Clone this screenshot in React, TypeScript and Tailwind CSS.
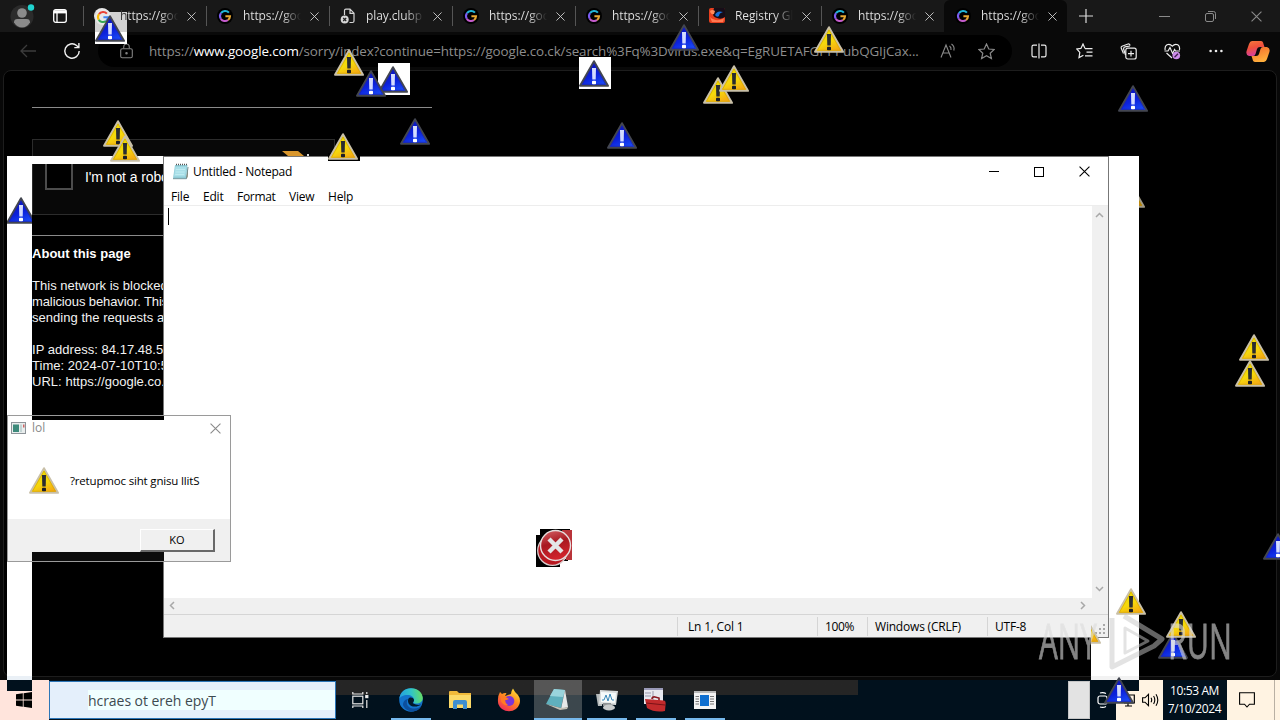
import React from 'react';
import clsx from 'clsx';

interface TabInfo {
  title: string;
  icon: 'google' | 'googleLight' | 'file' | 'registry';
  active?: boolean;
}

interface Stamp {
  kind: 'warn' | 'info';
  x: number;
  y: number;
  back?: 'white' | 'black';
}

const tabs: TabInfo[] = [
  { title: 'https://goo', icon: 'googleLight' },
  { title: 'https://goo', icon: 'google' },
  { title: 'play.clubp', icon: 'file' },
  { title: 'https://goo', icon: 'google' },
  { title: 'https://goo', icon: 'google' },
  { title: 'Registry Gl', icon: 'registry' },
  { title: 'https://goo', icon: 'google' },
  { title: 'https://goo', icon: 'google', active: true },
];

// x, y is the top left corner of the 30x27 triangle
const stamps: Stamp[] = [
  { kind: 'info', x: 95, y: 15 },
  { kind: 'warn', x: 334, y: 49 },
  { kind: 'info', x: 378, y: 66, back: 'white' },
  { kind: 'info', x: 356, y: 70 },
  { kind: 'info', x: 579, y: 60, back: 'white' },
  { kind: 'info', x: 669, y: 24 },
  { kind: 'warn', x: 814, y: 26 },
  { kind: 'warn', x: 703, y: 77 },
  { kind: 'warn', x: 719, y: 65 },
  { kind: 'info', x: 400, y: 118 },
  { kind: 'info', x: 607, y: 122 },
  { kind: 'info', x: 1118, y: 85 },
  { kind: 'warn', x: 103, y: 120 },
  { kind: 'warn', x: 110, y: 135 },
  { kind: 'warn', x: 328, y: 133, back: 'black' },
  { kind: 'warn', x: 1239, y: 334 },
  { kind: 'warn', x: 1235, y: 360 },
  { kind: 'info', x: 1263, y: 533 },
  { kind: 'warn', x: 1116, y: 588 },
  { kind: 'info', x: 1158, y: 632 },
  { kind: 'warn', x: 1166, y: 611 },
  { kind: 'info', x: 1104, y: 677 },
];

const ui = "font-['Open_Sans','Noto_Sans',sans-serif]";

function Triangle({ kind }: { kind: 'warn' | 'info' }) {
  const info = kind === 'info';
  return (
    <svg width="30" height="27" viewBox="0 0 30 27" className="block shrink-0">
      <defs>
        <linearGradient id={'fill-' + kind} x1="0.3" y1="0" x2="0.8" y2="1">
          <stop offset="0" stopColor={info ? '#0810b8' : '#e6e000'} />
          <stop offset="0.55" stopColor={info ? '#0c22dc' : '#f6d80c'} />
          <stop offset="1" stopColor={info ? '#1c50fa' : '#f4a014'} />
        </linearGradient>
      </defs>
      <path
        d="M15 1.2 L29 25.8 H1 Z"
        fill={`url(#fill-${kind})`}
        stroke={info ? '#434650' : '#c9c0a8'}
        strokeWidth="1.9"
        strokeLinejoin="round"
      />
      <path d="M15 4 L26.5 24.3 H3.5 Z" fill="none" stroke={info ? '#1a22b0' : '#d9a800'} strokeWidth="0.7" />
      <path d="M13 8 h4 l-0.3 11.5 h-3.4 Z" fill={info ? '#d4dcff' : '#2a2c30'} />
      <rect x="13" y="20.8" width="4" height="3.4" rx="0.8" fill={info ? '#ffffff' : '#1c1d26'} />
    </svg>
  );
}

function GoogleIcon({ light }: { light?: boolean }) {
  const c = light ? ['#ea4335', '#fbbc05', '#34a853', '#4285f4'] : ['#22b6d8', '#7c5cf0', '#c45ccc', '#e8a832'];
  return (
    <svg width="16" height="16" viewBox="0 0 16 16" className="shrink-0">
      <circle cx="8" cy="8" r="8" fill={light ? '#e8e8e8' : '#000'} />
      <g fill="none" strokeWidth="2.1">
        <path d="M11.9 4.6 A5 5 0 0 0 4 5.2" stroke={c[0]} />
        <path d="M4 5.2 A5 5 0 0 0 3.8 10.8" stroke={c[1]} />
        <path d="M3.8 10.8 A5 5 0 0 0 11 12" stroke={c[2]} />
        <path d="M11 12 A5 5 0 0 0 13 8.2 H8.4" stroke={c[3]} />
      </g>
    </svg>
  );
}

function TabIcon({ icon }: { icon: TabInfo['icon'] }) {
  if (icon === 'file') {
    return (
      <svg width="16" height="16" viewBox="0 0 16 16" className="shrink-0" fill="none">
        <path d="M4.5 7 V2.6 q0-1.4 1.4-1.4 H10 l4 4 V13 q0 1.5-1.5 1.5 H9.5 M10 1.4 V5.3 H14" stroke="#d5d5d5" strokeWidth="1.2" />
        <circle cx="4.7" cy="11.5" r="4" fill="#d5d5d5" />
        <path d="M3.2 10 l3 3 M6.2 10 l-3 3" stroke="#222" strokeWidth="1.2" />
      </svg>
    );
  }
  if (icon === 'registry') {
    return (
      <svg width="16" height="16" viewBox="0 0 16 16" className="shrink-0">
        <rect width="16" height="15" rx="2" fill="#e8401f" />
        <path d="M5 0 H15 Q16 0 16 2 V9 Q12 12 8 10 Q3 9 4 4 Z" fill="#160d18" />
        <path d="M6 7 Q8 2 14 4 Q10 5 10 8 Q8 10 6 7" fill="#1670d8" />
        <path d="M1 3 Q3 1 6 3 L5 6 Q2 7 1 3" fill="#ff8a5a" />
        <path d="M1 9 C5 13 11 13 15 10 L14 14 H3 Z" fill="#ff7a52" />
      </svg>
    );
  }
  return <GoogleIcon light={icon === 'googleLight'} />;
}

function Cross({ size, color }: { size: number; color: string }) {
  return (
    <svg width={size} height={size} viewBox="0 0 10 10" className="shrink-0" fill="none">
      <path d="M0.5 0.5 L9.5 9.5 M9.5 0.5 L0.5 9.5" stroke={color} strokeWidth="1" />
    </svg>
  );
}

function TabBar() {
  return (
    <div className="flex h-8 w-full shrink-0 bg-[#181818]">
      <div className="flex w-[83px] shrink-0 items-center">
        <svg width="26" height="26" viewBox="0 0 26 26" className="ml-[10px]">
          <circle cx="12" cy="13.5" r="11.5" fill="#2b2b2b" />
          <circle cx="12" cy="10" r="4.8" fill="#8b8b8b" />
          <path d="M4 19.5 q0-3.4 3.4-3.4 h9.2 q3.4 0 3.4 3.4 q-3 5-8 5 t-8-5" fill="#8b8b8b" />
          <circle cx="21" cy="4.5" r="3.2" fill="#20d3cf" />
        </svg>
        <svg width="14" height="14" viewBox="0 0 14 14" className="ml-[17px]" fill="none" stroke="#fff" strokeWidth="1.3">
          <rect x="0.7" y="0.7" width="12.6" height="12.6" rx="2" />
          <path d="M1 2.8 H13" strokeWidth="3.2" />
          <path d="M4 4 V13" />
        </svg>
      </div>
      {tabs.map((tab, i) => (
        <div
          key={i}
          className={clsx(
            'flex h-8 w-[123px] shrink-0 items-center',
            tab.active && 'rounded-t-md bg-[#090909]'
          )}
        >
          <div className={clsx('mr-[10px] h-5 w-px', !tab.active && 'bg-[#555]')} />
          <TabIcon icon={tab.icon} />
          <div
            className={clsx(
              ui,
              'ml-[10px] w-[66px] whitespace-nowrap bg-clip-text text-[12px] tracking-[-0.1px] text-transparent',
              tab.icon === 'googleLight'
                ? 'relative z-10 bg-[linear-gradient(90deg,#333_7px,#e6e6e6_7px,#e6e6e6_60%,transparent_88%)]'
                : 'bg-gradient-to-r from-[#e6e6e6] from-60% to-transparent to-88%'
            )}
          >
            {tab.title}
          </div>
          <div className="ml-px flex">
            <Cross size={9} color="#cfcfcf" />
          </div>
        </div>
      ))}
      <svg width="14" height="14" viewBox="0 0 14 14" className="ml-[12px] mt-[9px]" stroke="#dcdcdc" strokeWidth="1.2">
        <path d="M7 0 V14 M0 7 H14" />
      </svg>
      <div className="ml-auto flex items-center gap-[35px] pr-[18px] text-[#8a8a8a]">
        <div className="h-px w-[11px] bg-[#8a8a8a]" />
        <svg width="11" height="11" viewBox="0 0 11 11" fill="none" stroke="currentColor">
          <rect x="0.5" y="2.5" width="8" height="8" rx="1.5" />
          <path d="M3 0.5 H8.5 Q10.5 0.5 10.5 2.5 V8" />
        </svg>
        <Cross size={11} color="#8a8a8a" />
      </div>
    </div>
  );
}

function Toolbar() {
  return (
    <div className="flex h-[38px] w-full shrink-0 items-center bg-[#090909]">
      <svg width="16" height="14" viewBox="0 0 16 14" className="ml-[20px]" fill="none" stroke="#3c3c3c" strokeWidth="1.3">
        <path d="M16 7 H1 M7 1 L1 7 L7 13" />
      </svg>
      <svg width="18" height="18" viewBox="0 0 18 18" className="ml-[27px]" fill="none" stroke="#f0f0f0" strokeWidth="1.4">
        <path d="M16.2 9 A7.2 7.2 0 1 1 13.6 3.5 L15.6 5.4 M15.9 1 V5.6 H11.3" />
      </svg>
      <div className="ml-[17px] flex h-8 w-[914px] items-center rounded-full bg-black">
        <svg width="13" height="16" viewBox="0 0 13 16" className="ml-[22px] shrink-0" fill="none" stroke="#828282" strokeWidth="1.1">
          <rect x="0.7" y="5.7" width="11.6" height="9" rx="1.5" />
          <path d="M3.7 5.5 V4 Q3.7 1 6.5 1 T9.3 4 V5.5" />
          <circle cx="6.5" cy="10.2" r="0.7" fill="#828282" />
        </svg>
        <div className={clsx(ui, 'ml-[16px] w-[774px] whitespace-nowrap text-[13.4px] tracking-[-0.114px] text-[#8d8d8d]')}>
          https://<span className="text-white">www.google.com</span>
          /sorry/index?continue=https://google.co.ck/search%3Fq%3Dvirus.exe&amp;q=EgRUETAFGPPPubQGIjCax...
        </div>
        <svg width="17" height="16" viewBox="0 0 17 16" className="ml-[17px] shrink-0" fill="none" stroke="#8a8a8a" strokeWidth="1.1">
          <path d="M1 14.5 L6 2 L11 14.5 M2.8 10 H9.2" />
          <path d="M9.5 3 Q11.5 4.5 11 7 M11.5 1 Q15 3.5 13.8 7.5" />
        </svg>
        <svg width="17" height="17" viewBox="0 0 17 17" className="ml-[21px] shrink-0" fill="none" stroke="#8a8a8a" strokeWidth="1.2">
          <path d="M8.5 1 L10.8 6 L16.2 6.5 L12.2 10.2 L13.4 15.6 L8.5 12.8 L3.6 15.6 L4.8 10.2 L0.8 6.5 L6.2 6 Z" />
        </svg>
      </div>
      <div className="ml-[19px] flex items-center text-[#ededed]">
        <svg width="16" height="16" viewBox="0 0 16 16" fill="none" stroke="currentColor" strokeWidth="1.2">
          <path d="M6 2.2 H2.6 Q1 2.2 1 3.8 V12.2 Q1 13.8 2.6 13.8 H6 M10 2.2 H13.4 Q15 2.2 15 3.8 V12.2 Q15 13.8 13.4 13.8 H10 M8 0.5 V15.5" />
        </svg>
        <svg width="17" height="16" viewBox="0 0 17 16" className="ml-[29px]" fill="none" stroke="currentColor" strokeWidth="1.2">
          <path d="M9 5.4 L7 1 L4.9 5.4 L0.8 6 L3.8 9.4 L3 14.6 L7.4 12.2" />
          <path d="M9 5.6 H16.5 M10.5 9.2 H16.5 M9 12.8 H16.5" />
        </svg>
        <svg width="17" height="17" viewBox="0 0 17 17" className="ml-[27px]" fill="none" stroke="currentColor" strokeWidth="1.2">
          <path d="M3.5 10.5 L1.2 5 Q0.8 3.8 2 3.2 L8 1 Q9.5 0.7 10.2 2.5 M5.5 12 L3.6 6 Q3.4 4.5 5 3.8 L10 3" />
          <rect x="5.8" y="5.2" width="10.4" height="10.8" rx="2" />
          <path d="M11 7.7 V13.5 M8 10.6 H14" />
        </svg>
        <svg width="17" height="17" viewBox="0 0 17 17" className="ml-[27px]" fill="none" stroke="currentColor" strokeWidth="1.2">
          <path d="M1.2 7 Q0.4 3.5 3 1.8 Q6 0.4 8.3 3.2 Q10.8 0.4 13.8 1.8 Q16.2 3.5 15.4 7 M2.5 10 L8 15" />
          <path d="M0.5 8 H4 L6 4.6 L8.6 10.4 L10.6 6.5 L11.5 8 H16" />
          <circle cx="12.3" cy="12.5" r="3.8" fill="#cc8be8" stroke="none" />
          <path d="M10.5 14.2 L14 10.8" stroke="#3b1d4a" />
        </svg>
        <svg width="14" height="4" viewBox="0 0 14 4" className="ml-[28px]" fill="currentColor">
          <circle cx="1.6" cy="2" r="1.3" />
          <circle cx="7" cy="2" r="1.3" />
          <circle cx="12.4" cy="2" r="1.3" />
        </svg>
        <svg width="24" height="23" viewBox="0 0 24 23" className="ml-[23px]">
          <defs>
            <linearGradient id="cop-a" x1="0" y1="0" x2="0.3" y2="1">
              <stop offset="0" stopColor="#f57a3c" />
              <stop offset="0.5" stopColor="#f0503c" />
              <stop offset="1" stopColor="#d6409f" />
            </linearGradient>
            <linearGradient id="cop-b" x1="0" y1="0" x2="0.4" y2="1">
              <stop offset="0" stopColor="#f0682c" />
              <stop offset="1" stopColor="#ffae3c" />
            </linearGradient>
          </defs>
          <path d="M6 1 H15 Q17 1 17.5 4 L18.5 7 H14 Q11.5 7 11 9 L9.5 14 Q9 16 7 16 H3 Q-0.5 15 0.6 11 L3 4 Q4 1 6 1" fill="url(#cop-a)" />
          <path d="M18 22 H9 Q7 22 6.5 19 L5.5 16 H10 Q12.5 16 13 14 L14.5 9 Q15 7 17 7 H21 Q24.5 8 23.4 12 L21 19 Q20 22 18 22" fill="url(#cop-b)" />
        </svg>
      </div>
    </div>
  );
}

function CaptchaPage() {
  return (
    <div className="h-[610px] w-full bg-[#080808]">
      <div className="ml-[3px] h-[607px] w-[1274px] rounded-lg border border-[#1d1d1d] bg-black pl-7 font-['Liberation_Sans',Arial,sans-serif] text-[13px] leading-4 tracking-[0.03px] text-[#f2f2f2]">
        <div className="mt-[36px] h-px w-[400px] bg-[#8a8a8a]" />
        <div className="mt-[31px] flex h-[76px] w-[303px] items-start border border-[#2c2c2c] bg-[#080808] pl-3 pt-[22px]">
          <div className="h-7 w-7 border-2 border-[#4c4c4c] bg-black" />
          <span className="ml-3 mt-[7px] text-[14px] tracking-[-0.1px] text-white">I'm not a robot</span>
        </div>
        <div className="mt-[20px] h-px w-[400px] bg-[#8a8a8a]" />
        <div className="mt-[10px] font-bold tracking-[0.03px] text-white">About this page</div>
        <p className="mt-4 whitespace-nowrap">
          This network is blocked due to unaddressed abuse complaints about
          <br />
          <span className="tracking-[-0.1px]">malicious behavior. This page checks to see if it's really a human</span>
          <br />
          sending the requests and not a robot coming from this network.
        </p>
        <p className="mt-4">
          IP address: 84.17.48.53
          <br />
          Time: 2024-07-10T10:53:04Z
          <br />
          URL: https://google.co.ck/search
        </p>
      </div>
    </div>
  );
}

function Chevron({ d }: { d: string }) {
  return (
    <svg width="9" height="9" viewBox="0 0 9 9" fill="none" stroke="#a8a8a8" strokeWidth="1.5">
      <path d={d} />
    </svg>
  );
}

function NotepadWindow() {
  return (
    <div
      className={clsx(
        ui,
        'absolute left-[163px] top-[156px] flex h-[482px] w-[946px] flex-col border border-[#777] bg-white text-[12px] text-black'
      )}
    >
      <div className="flex h-[29px] items-center">
        <svg width="17" height="17" viewBox="0 0 17 17" className="ml-[8px]">
          <path d="M3 2 H15.5 L14 15.5 H1 Z" fill="#8fcbd6" />
          <path d="M3.4 3.5 H14.6 L13.2 13.5 H2 Z" fill="#a9dfe8" />
          <path d="M14.2 15.8 L16.2 3 L15.6 14 Z" fill="#8a7750" />
          <path d="M1 15.7 H14.5 L16 4" fill="none" stroke="#5b7f88" strokeWidth="0.8" />
          <path d="M4 1.5 H15" stroke="#555" strokeWidth="1.6" strokeDasharray="1 1" />
          <path d="M4 6.5 H13 M3.6 9 H12.6 M3.2 11.5 H12.2" stroke="#c9f0f5" strokeWidth="0.7" />
        </svg>
        <span className="ml-[4px] pt-px tracking-[-0.25px]">Untitled - Notepad</span>
        <div className="ml-auto flex items-center gap-[35px] pr-[18px]">
          <div className="h-px w-[10px] bg-black" />
          <div className="h-[10px] w-[10px] border border-black" />
          <Cross size={11} color="#000" />
        </div>
      </div>
      <div className="flex h-[20px] items-center border-b border-[#ededed] pl-[7px] pt-[2px] tracking-[-0.2px]">
        <span className="w-8">File</span>
        <span className="w-[34px]">Edit</span>
        <span className="w-[52px] tracking-[-0.3px]">Format</span>
        <span className="w-[39px]">View</span>
        <span>Help</span>
      </div>
      <div className="flex flex-1">
        <div className="flex-1 pl-[4px] pt-[2px]">
          <div className="h-[17px] w-px bg-black" />
        </div>
        <div className="flex w-[16px] flex-col items-center justify-between bg-[#f0f0f0] pb-[5px] pr-px pt-[5px]">
          <Chevron d="M1 6 L4.5 2.5 L8 6" />
          <Chevron d="M1 3 L4.5 6.5 L8 3" />
        </div>
      </div>
      <div className="flex h-[16px] items-center justify-between bg-[#f0f0f0] pb-px pl-[4px] pr-[21px]">
        <Chevron d="M6 1 L2.5 4.5 L6 8" />
        <Chevron d="M3 1 L6.5 4.5 L3 8" />
      </div>
      <div className="flex h-[23px] items-center border-t border-[#d5d5d5] bg-[#f0f0f0] pl-[513px] tracking-[-0.2px]">
        <div className="flex h-[19px] w-[140px] items-center border-l border-[#d5d5d5] pl-[10px] pt-[2px]">Ln 1, Col 1</div>
        <div className="flex h-[19px] w-[50px] items-center border-l border-[#d5d5d5] pl-[7px] pt-[2px] tracking-[-0.4px]">100%</div>
        <div className="flex h-[19px] w-[120px] items-center border-l border-[#d5d5d5] pl-[7px] pt-[2px]">Windows (CRLF)</div>
        <div className="flex h-[19px] flex-1 items-center border-l border-[#d5d5d5] pl-[7px] pt-[2px]">UTF-8</div>
        <svg width="12" height="12" viewBox="0 0 12 12" fill="#a8a8a8" className="mr-px mt-[8px]">
          <path d="M8 0h2v2h-2z M4 4h2v2h-2z M8 4h2v2h-2z M0 8h2v2h-2z M4 8h2v2h-2z M8 8h2v2h-2z" />
        </svg>
      </div>
    </div>
  );
}

function LolDialog() {
  return (
    <div className={clsx(ui, 'absolute left-[7px] top-[415px] flex h-[147px] w-[224px] flex-col bg-white text-[12px]')}>
      <div className="flex h-[26px] items-center pl-[4px] pr-[10px]">
        <svg width="15" height="12" viewBox="0 0 15 12">
          <rect x="0.5" y="0.5" width="14" height="11" fill="#e9eded" stroke="#8d9499" />
          <rect x="2" y="2.5" width="6" height="7.5" fill="#3d8a7b" />
          <rect x="9" y="2.5" width="2" height="7.5" fill="#c3d4d4" />
          <rect x="12" y="2.5" width="1.5" height="3" fill="#c66" />
        </svg>
        <span className="ml-[6px] text-[#8a8a8a]">lol</span>
        <div className="ml-auto">
          <Cross size={11} color="#8a8a8a" />
        </div>
      </div>
      <div className="flex h-[78px] items-center pl-[22px]">
        <Triangle kind="warn" />
        <span className="ml-[11px] mt-[2px] text-[11.5px] tracking-[-0.17px]">?retupmoc siht gnisu llitS</span>
      </div>
      <div className="flex flex-1 bg-[#f0f0f0] pl-[133px] pt-[10px]">
        <div className="flex h-[23px] w-[75px] items-center justify-center border border-b-2 border-r-2 border-b-[#696969] border-r-[#696969] border-l-white border-t-white text-[11px]">
          KO
        </div>
      </div>
      {/* slices of the old desktop bleeding through */}
      <div className="absolute left-[25px] top-0 h-[5px] w-[132px] bg-black" />
      <div className="absolute bottom-0 left-[25px] h-[10px] w-[132px] bg-[#0c0c0c]" />
      <div className="absolute inset-0 border border-[#9a9a9a]" />
    </div>
  );
}

function ErrorIcon() {
  return (
    <svg width="36" height="38" viewBox="0 0 36 38" className="absolute left-[536px] top-[529px]">
      <defs>
        <linearGradient id="err" x1="0" y1="0" x2="0.3" y2="1">
          <stop offset="0" stopColor="#d8686c" />
          <stop offset="0.5" stopColor="#a81820" />
          <stop offset="1" stopColor="#d0242c" />
        </linearGradient>
      </defs>
      <path d="M4 0 H34 V6 H8 V38 H0 V6 H4 Z" fill="#000" />
      <path d="M0 30 H32 V38 H0 Z" fill="#000" />
      <path d="M24 32 H36 V38 H24 Z" fill="#fff" />
      <path d="M26 1 H36 V31 H30 Z" fill="#b9343a" />
      <circle cx="16.5" cy="21.5" r="14.8" fill="#b81820" stroke="#d8cfcf" strokeWidth="1.3" />
      <circle cx="19.5" cy="16.5" r="15" fill="url(#err)" stroke="#e6dcdc" strokeWidth="1.4" />
      <path d="M13 10 L26 23 M26 10 L13 23" stroke="#e4e6e6" strokeWidth="4.4" />
    </svg>
  );
}

function Watermark() {
  return (
    <svg width="200" height="64" viewBox="0 0 200 64" className="absolute left-[1036px] top-[610px] overflow-visible">
      <g
        fill="#dcdcdc"
        stroke="#dcdcdc"
        strokeWidth="0.8"
        opacity="0.6"
        fontFamily="'Open Sans', sans-serif"
        fontSize="50"
      >
        <text x="3" y="49" textLength="58" lengthAdjust="spacingAndGlyphs">ANY</text>
        <text x="132" y="49" textLength="64" lengthAdjust="spacingAndGlyphs">RUN</text>
      </g>
      <g fill="none" stroke="#c8c8c8" opacity="0.5" strokeWidth="5" strokeLinejoin="round">
        <path d="M88 6 L126 29 L118 36 L76 57 V8" />
        <path d="M89 18 L112 31 L89 43 Z" strokeWidth="3" />
      </g>
    </svg>
  );
}

function Underlined({ children, className }: { children: React.ReactNode; className: string }) {
  return (
    <div className={clsx('flex h-10 w-10 items-center justify-center border-b-2 border-[#76b9ed]', className)}>
      {children}
    </div>
  );
}

function Taskbar() {
  return (
    <div className="relative flex h-10 w-full shrink-0 bg-[#01111d]">
      <div className="flex w-[49px] shrink-0 items-center bg-[#ffe4dc] pl-[16px]">
        <svg width="16" height="16" viewBox="0 0 16 16" fill="#000">
          <path d="M0 2.2 L6.8 1.3 V7.6 H0 Z M7.6 1.2 L16 0 V7.6 H7.6 Z M0 8.4 H6.8 V14.7 L0 13.8 Z M7.6 8.4 H16 V16 L7.6 14.8 Z" />
        </svg>
      </div>
      <div className="mt-px flex h-[38px] w-[287px] shrink-0 items-center border border-[#2c76b8] bg-[#e4effb] pl-[38px]">
        <div className={clsx(ui, 'flex h-[20px] w-full items-center bg-[#f0ffff] text-[14px] tracking-[-0.05px] text-[#3d4a50]')}>
          hcraes ot ereh epyT
        </div>
      </div>
      <div className="flex w-[522px] shrink-0 bg-gradient-to-b from-[#252525] from-[15px] to-[#01111d] to-[15px]">
        <svg width="17" height="16" viewBox="0 0 17 16" className="ml-[16px] mt-[12px]" fill="none" stroke="#e8e8e8" strokeWidth="1.2">
          <rect x="0.8" y="4.2" width="10" height="7.6" />
          <path d="M0.8 0 V2 H10.8 V0 M0.8 16 V14 H10.8 V16 M14.8 0 V2 M14.8 8 V16" />
          <rect x="13.8" y="3.6" width="2" height="2" fill="#fff" />
        </svg>
        <Underlined className="ml-[22px]">
          <svg width="24" height="24" viewBox="0 0 24 24" className="mt-[2px]">
            <defs>
              <linearGradient id="edge-a" x1="0" y1="0.3" x2="1" y2="0.2">
                <stop offset="0" stopColor="#249fe0" />
                <stop offset="0.5" stopColor="#30c4c8" />
                <stop offset="1" stopColor="#6ae05c" />
              </linearGradient>
            </defs>
            <circle cx="12" cy="12" r="11.8" fill="#1373cc" />
            <path d="M0.3 11 C1 4 6 0.2 12 0.2 C19 0.2 23.8 5 23.8 10 C23.8 14 20 16 16 15.5 C13.5 15 15 13.6 15 12 C15 9 12 7 8.5 7 C4 7 1 9 0.3 11" fill="url(#edge-a)" />
            <path d="M9 11 C6 15 9 20 14 20.5 C18 21 21 19.5 22.5 17.5 C19 26 7 25 4 17 C4 13 7 11 9 11" fill="#0c4f9e" />
            <path d="M9.3 11 C8 15 11 18.5 15.5 18.6 C18.5 18.6 22 17 22.8 16.2 C22 17 17 17.4 14.3 15.6 C13 14.5 15.2 14 15 11.8 C14 9 10.5 9 9.3 11" fill="#031a2c" />
          </svg>
        </Underlined>
        <svg width="22" height="20" viewBox="0 0 22 20" className="ml-[18px] mt-[10px]">
          <path d="M0 2 Q0 1 1 1 H8 L10 3 H22 V18 H0 Z" fill="#f0b93a" />
          <path d="M0 5 H22 V18 H0 Z" fill="#fbd968" />
          <path d="M4 19 V12 Q4 10 6 10 H16 Q18 10 18 12 V19 H14 V14.5 H8 V19 Z" fill="#3f8fcf" />
        </svg>
        <svg width="24" height="24" viewBox="0 0 24 24" className="ml-[26px] mt-[8px]">
          <defs>
            <linearGradient id="fox" x1="0.8" y1="0" x2="0.2" y2="1">
              <stop offset="0" stopColor="#ffe23a" />
              <stop offset="0.45" stopColor="#ff8a1e" />
              <stop offset="1" stopColor="#f0245e" />
            </linearGradient>
          </defs>
          <path d="M3 4 L5 6 Q7 4.5 9.5 5 L8 8 L14 6 Q14 3 16 0.5 Q18 5 21 7 Q24 11 22.5 16 Q20 23 12 23.3 Q4 23 1.3 16 Q0 9 3 4" fill="url(#fox)" />
          <circle cx="12.3" cy="13" r="5" fill="#7a35d8" />
          <path d="M4 8 Q8 8 12 11 Q9 12.5 8 12 Q8 15 11 17 Q6 18 4 13 Z" fill="#ff7a24" />
        </svg>
        <div className="ml-[13px] flex h-10 w-[48px] shrink-0 items-center justify-center border-b-2 border-[#76b9ed] bg-gradient-to-b from-[#565656] from-[15px] to-[#3c474d] to-[15px] pr-[2px]">
          <svg width="24" height="24" viewBox="0 0 24 24">
            <path d="M9 2 L20 3 L16 21 L1 17 Z" fill="#5fb0bd" />
            <path d="M9 2 L20 3 L18 10 L5 9 Z" fill="#9ad4dc" />
            <path d="M20 3 L23 20 L16 22 Z" fill="#e6e8e8" />
            <path d="M1 17 L16 21 L23 20 L22 22 L15 23 Z" fill="#c5c2b6" />
          </svg>
        </div>
        <Underlined className="ml-[5px]">
          <svg width="24" height="22" viewBox="0 0 24 22" className="mt-[2px]">
            <path d="M1 5 H7 V17 H3 Z" fill="#b5babb" />
            <path d="M5 1 L23 2 L21 16 L4 15 Z" fill="#d8dcdc" />
            <path d="M6 3 L21 4 L20 14 L6 13 Z" fill="#f5fafa" />
            <path d="M7 11 H9 L11 6 L13 12 L15 5 L17 11 H19" fill="none" stroke="#3a88b8" />
            <path d="M8 14 H16 V17 H8 Z" fill="#8f9496" />
            <ellipse cx="14" cy="18.5" rx="6" ry="3" fill="#c8cccd" />
          </svg>
        </Underlined>
        <Underlined className="ml-[9px]">
          <svg width="24" height="24" viewBox="0 0 24 24" className="mr-[2px] mt-[2px]">
            <path d="M1 0 H20 V16 H1 Z" fill="#e8e8ee" />
            <path d="M1 0 H20 V2 H1 Z" fill="#9a9ab8" />
            <path d="M2 5 H8 M2 8 H8 M10 3 V14" stroke="#99a" />
            <path d="M9 11 Q9 8.5 12 9 L16 10 V13" fill="none" stroke="#8a1820" strokeWidth="1.6" />
            <path d="M2 11 L21 12.5 Q23 13 22.6 16 L22 23 Q12 25 4 20 Z" fill="#c22a2c" />
            <path d="M3 15 L22 17" stroke="#7a1216" />
          </svg>
        </Underlined>
        <Underlined className="ml-[9px]">
          <svg width="22" height="18" viewBox="0 0 22 18" className="mt-[2px]">
            <rect width="22" height="18" fill="#f3f3f3" />
            <rect width="22" height="2" fill="#b8b8b8" />
            <rect x="6" y="4" width="9" height="11" fill="#0f6fd0" />
            <path d="M1.5 5.5 H5 M1.5 8 H5 M1.5 10.5 H5 M1.5 13 H5 M16 5.5 H20 M16 8 H20 M16 10.5 H20 M16 13 H20" stroke="#777" />
          </svg>
        </Underlined>
      </div>
      <div className="ml-auto flex">
        <div className="mr-px mt-px h-[38px] w-[22px] border border-[#c6c6c6] bg-[#e3e3e3]" />
        <div className="flex w-[25px] items-center pl-[6px]">
          <svg width="12" height="16" viewBox="0 0 12 16" fill="none" stroke="#fff" strokeWidth="1.2">
            <rect x="1" y="4" width="9" height="8" rx="2" />
            <path d="M3 1 Q6 0 9 1.5 M3 15 Q6 16 9 14.5" />
          </svg>
        </div>
        <div className="flex w-[47px] items-center bg-[#fff3e2] pl-[4px]">
          <svg width="15" height="14" viewBox="0 0 15 14" fill="none" stroke="#000" strokeWidth="1.2">
            <path d="M4 2 H14.3 V10 H4 M8 10 V13 M5 13 H12" />
          </svg>
          <svg width="18" height="14" viewBox="0 0 18 14" className="ml-[7px]" fill="none" stroke="#000" strokeWidth="1.1">
            <path d="M0.6 4.8 H3 L6.5 1.4 V12.6 L3 9.2 H0.6 Z M9 4.8 Q10.4 7 9 9.2 M11.6 3 Q14 7 11.6 11 M14 1.2 Q17.6 7 14 12.8" />
          </svg>
        </div>
        <div className={clsx(ui, 'flex w-[64px] flex-col items-center pr-px pt-[2px] text-[12px] leading-[18px] tracking-[-0.38px] text-white')}>
          <span>10:53 AM</span>
          <span>7/10/2024</span>
        </div>
        <div className="flex w-[53px] items-center bg-[#fff3e2] pl-[12px]">
          <svg width="16" height="16" viewBox="0 0 16 16" fill="none" stroke="#000" strokeWidth="1.1">
            <path d="M0.6 0.8 H15.4 V12.2 H10.5 L8 15 L5.5 12.2 H0.6 Z" />
          </svg>
          <div className="ml-[19px] h-10 w-px bg-[#b9b0a4]" />
        </div>
      </div>
    </div>
  );
}

export default function App() {
  return (
    <div className="relative flex h-[720px] w-[1280px] flex-col overflow-hidden bg-black">
      <TabBar />
      <Toolbar />
      <CaptchaPage />
      <Taskbar />

      {/* inverted smears left behind the windows */}
      <div className="absolute left-[7px] top-[156px] h-[524px] w-[25px] overflow-hidden border-b-4 border-[#eaf0f6] bg-white">
        <div className="absolute left-[-1px] top-[41px]">
          <Triangle kind="info" />
        </div>
      </div>
      <div className="absolute left-[32px] top-[156px] h-[8px] w-[132px] bg-white" />
      <div className="absolute left-[7px] top-[680px] h-[11px] w-[25px] bg-[#01111d]" />
      <div className="absolute left-[1091px] top-[156px] h-[524px] w-[48px] border-b-4 border-[#f2f2f2] bg-white" />
      <div className="absolute left-[1116px] top-[680px] h-[11px] w-[23px] bg-[#01111d]" />
      <div className="absolute left-[95px] top-[12px] h-[32px] w-[32px] bg-white">
        <div className="h-[20px] bg-[#d2d2d2]" />
        <div className="absolute left-0 top-[-3px]">
          <GoogleIcon light />
        </div>
      </div>
      <div className="absolute left-[1139px] top-[181px] w-[6px] overflow-hidden opacity-80">
        <div className="-ml-[24px] w-[30px]">
          <Triangle kind="warn" />
        </div>
      </div>
      <svg width="28" height="6" viewBox="0 0 28 6" className="absolute left-[282px] top-[151px]">
        <path d="M0 0 H16 L22 5 H6 Z" fill="#d9962c" />
        <rect x="25" y="3" width="2" height="2" fill="#ddd" />
      </svg>

      <NotepadWindow />
      <LolDialog />
      <ErrorIcon />

      <div className="absolute left-[1091px] top-[617px] w-[10px] overflow-hidden">
        <div className="-ml-[20px] w-[30px]">
          <Triangle kind="warn" />
        </div>
      </div>
      {stamps.map((s, i) => (
        <div key={i} className="absolute" style={{ left: s.x, top: s.y }}>
          {s.back === 'white' && <div className="absolute left-0 top-[-3px] h-[32px] w-[32px] bg-white" />}
          {s.back === 'black' && <div className="absolute left-0 top-[20px] h-[8px] w-[32px] bg-black" />}
          <div className="relative">
            <Triangle kind={s.kind} />
          </div>
        </div>
      ))}
      <Watermark />
    </div>
  );
}
